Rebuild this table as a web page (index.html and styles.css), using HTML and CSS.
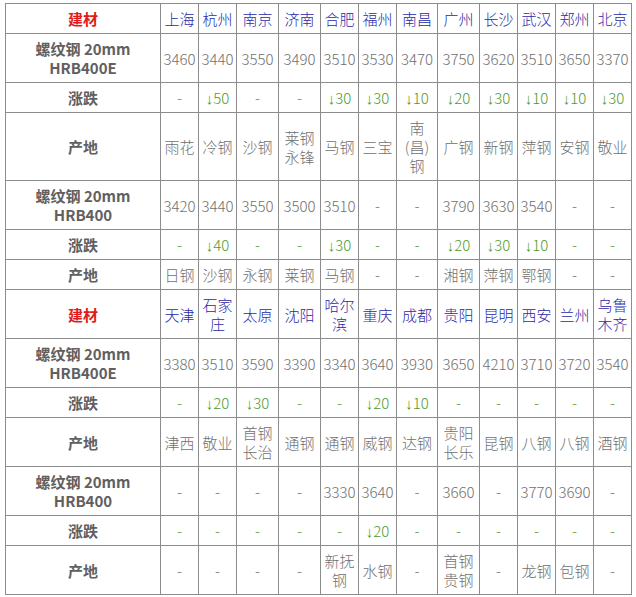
FILE: index.html
```html
<!DOCTYPE html>
<html lang="zh-CN">
<head>
<meta charset="utf-8">
<title>螺纹钢价格</title>
<link rel="stylesheet" href="styles.css">
</head>
<body>
<table class="price">
<colgroup>
<col class="w155"><col class="w38"><col class="w38"><col class="w42"><col class="w42"><col class="w38"><col class="w38"><col class="w41"><col class="w42"><col class="w38"><col class="w38"><col class="w38"><col class="w38">
</colgroup>
<tbody>
<tr class="head">
<th class="lab red">建材</th>
<th>上海</th><th>杭州</th><th>南京</th><th>济南</th><th>合肥</th><th>福州</th><th>南昌</th><th>广州</th><th>长沙</th><th>武汉</th><th>郑州</th><th>北京</th>
</tr>
<tr>
<td class="lab">螺纹钢 20mm<br>HRB400E</td>
<td>3460</td><td>3440</td><td>3550</td><td>3490</td><td>3510</td><td>3530</td><td>3470</td><td>3750</td><td>3620</td><td>3510</td><td>3650</td><td>3370</td>
</tr>
<tr class="chg">
<td class="lab">涨跌</td>
<td>-</td><td><span class="arr">↓</span>50</td><td>-</td><td>-</td><td><span class="arr">↓</span>30</td><td><span class="arr">↓</span>30</td><td><span class="arr">↓</span>10</td><td><span class="arr">↓</span>20</td><td><span class="arr">↓</span>30</td><td><span class="arr">↓</span>10</td><td><span class="arr">↓</span>10</td><td><span class="arr">↓</span>30</td>
</tr>
<tr>
<td class="lab">产地</td>
<td>雨花</td><td>冷钢</td><td>沙钢</td><td>莱钢<br>永锋</td><td>马钢</td><td>三宝</td><td>南<br>(昌)<br>钢</td><td>广钢</td><td>新钢</td><td>萍钢</td><td>安钢</td><td>敬业</td>
</tr>
<tr>
<td class="lab">螺纹钢 20mm<br>HRB400</td>
<td>3420</td><td>3440</td><td>3550</td><td>3500</td><td>3510</td><td>-</td><td>-</td><td>3790</td><td>3630</td><td>3540</td><td>-</td><td>-</td>
</tr>
<tr class="chg">
<td class="lab">涨跌</td>
<td>-</td><td><span class="arr">↓</span>40</td><td>-</td><td>-</td><td><span class="arr">↓</span>30</td><td>-</td><td>-</td><td><span class="arr">↓</span>20</td><td><span class="arr">↓</span>30</td><td><span class="arr">↓</span>10</td><td>-</td><td>-</td>
</tr>
<tr>
<td class="lab">产地</td>
<td>日钢</td><td>沙钢</td><td>永钢</td><td>莱钢</td><td>马钢</td><td>-</td><td>-</td><td>湘钢</td><td>萍钢</td><td>鄂钢</td><td>-</td><td>-</td>
</tr>
<tr class="head">
<th class="lab red">建材</th>
<th>天津</th><th>石家<br>庄</th><th>太原</th><th>沈阳</th><th>哈尔<br>滨</th><th>重庆</th><th>成都</th><th>贵阳</th><th>昆明</th><th>西安</th><th>兰州</th><th>乌鲁<br>木齐</th>
</tr>
<tr>
<td class="lab">螺纹钢 20mm<br>HRB400E</td>
<td>3380</td><td>3510</td><td>3590</td><td>3390</td><td>3340</td><td>3640</td><td>3930</td><td>3650</td><td>4210</td><td>3710</td><td>3720</td><td>3540</td>
</tr>
<tr class="chg">
<td class="lab">涨跌</td>
<td>-</td><td><span class="arr">↓</span>20</td><td><span class="arr">↓</span>30</td><td>-</td><td>-</td><td><span class="arr">↓</span>20</td><td><span class="arr">↓</span>10</td><td>-</td><td>-</td><td>-</td><td>-</td><td>-</td>
</tr>
<tr>
<td class="lab">产地</td>
<td>津西</td><td>敬业</td><td>首钢<br>长治</td><td>通钢</td><td>通钢</td><td>威钢</td><td>达钢</td><td>贵阳<br>长乐</td><td>昆钢</td><td>八钢</td><td>八钢</td><td>酒钢</td>
</tr>
<tr>
<td class="lab">螺纹钢 20mm<br>HRB400</td>
<td>-</td><td>-</td><td>-</td><td>-</td><td>3330</td><td>3640</td><td>-</td><td>3660</td><td>-</td><td>3770</td><td>3690</td><td>-</td>
</tr>
<tr class="chg">
<td class="lab">涨跌</td>
<td>-</td><td>-</td><td>-</td><td>-</td><td>-</td><td><span class="arr">↓</span>20</td><td>-</td><td>-</td><td>-</td><td>-</td><td>-</td><td>-</td>
</tr>
<tr>
<td class="lab">产地</td>
<td>-</td><td>-</td><td>-</td><td>-</td><td>新抚<br>钢</td><td>水钢</td><td>-</td><td>首钢<br>贵钢</td><td>-</td><td>龙钢</td><td>包钢</td><td>-</td>
</tr>
</tbody>
</table>
</body>
</html>
```

FILE: styles.css
```css
html, body {
  margin: 0;
  padding: 0;
  background: #ffffff;
}

body {
  font-family: "Noto Sans CJK SC", "Noto Sans", sans-serif;
  font-size: 15px;
  color: #707070;
}

.price {
  margin: 3px 0 0 5px;
  width: 627px;
  table-layout: fixed;
  border-collapse: collapse;
  border: 1px solid #333333;
}

.w155 { width: 155px; }
.w38 { width: 38px; }
.w41 { width: 41px; }
.w42 { width: 42px; }

.price th,
.price td {
  border: 1px solid #8c8c8c;
  padding: 5px 0;
  line-height: 19px;
  font-weight: 300;
  text-align: center;
  vertical-align: middle;
  white-space: nowrap;
}

.price th {
  color: #2a2aa8;
}

.price .lab {
  font-weight: bold;
  color: #606060;
}

.price .red {
  color: #e01b1b;
}

.chg td {
  color: #4f9a2e;
}

.chg td.lab {
  color: #606060;
}

.arr {
  font-family: "Liberation Sans", "DejaVu Sans", sans-serif;
  line-height: 0;
}
```
